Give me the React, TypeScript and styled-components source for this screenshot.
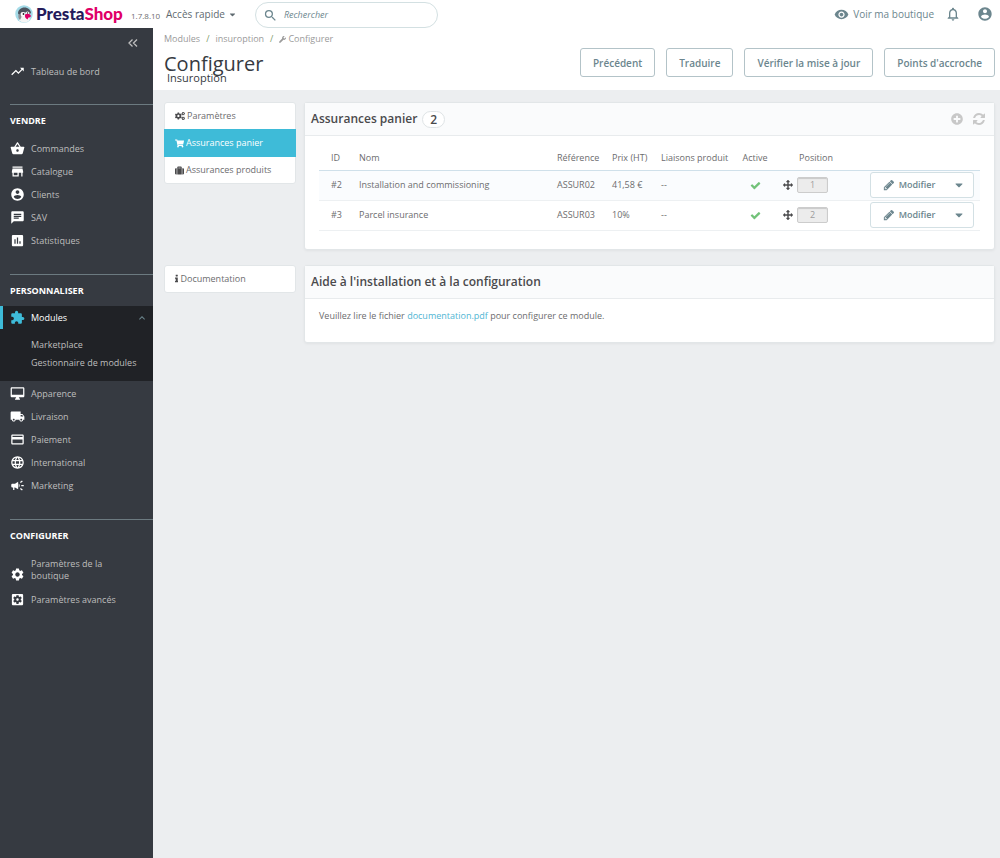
import React from "react";
import styled, { createGlobalStyle, css } from "styled-components";
import {
  MdTrendingUp, MdChat, MdAssessment, MdExtension, MdLocalShipping, MdPayment, MdLanguage,
  MdSettings, MdVisibility, MdNotificationsNone, MdSearch, MdKeyboardArrowUp,
} from "react-icons/md";
import { FaWrench, FaCogs, FaShoppingCart, FaSuitcase, FaCaretDown, FaPlusCircle } from "react-icons/fa";

const GlobalStyle = createGlobalStyle`
  *, *::before, *::after { box-sizing: border-box; }
  body {
    margin: 0;
    background: #eceef0;
    color: #6c6c6e;
    font-family: "Open Sans", "Liberation Sans", sans-serif;
    font-size: 9px;
    line-height: 12px;
  }
  button, input { font-family: inherit; }
  a { text-decoration: none; color: inherit; }
  ul { list-style: none; margin: 0; padding: 0; }
  h1, h2, h3, p { margin: 0; }
  svg { flex: none; display: block; }
`;

const Page = styled.div`
  min-height: 100vh;
  display: flex;
  flex-direction: column;
`;

const TopBar = styled.header`
  height: 28px;
  flex: none;
  display: flex;
  align-items: center;
  background: #fff;
  padding: 0 7px 0 15px;
`;

const Logo = styled.a`
  display: flex;
  align-items: center;
  gap: 3px;
  width: 109px;
  font-family: Lato, "Open Sans", sans-serif;
  font-size: 17px;
  font-weight: 900;
  line-height: 24px;
  color: #251b5b;
`;

const LogoAccent = styled.span`
  color: #df0067;
`;

const Version = styled.span`
  width: 35px;
  margin-left: 7px;
  padding-top: 3px;
  font-size: 8px;
  white-space: nowrap;
`;

const QuickAccess = styled.button`
  display: flex;
  align-items: center;
  gap: 3px;
  padding: 0;
  border: 0;
  background: none;
  color: #5f6a70;
  font-size: 10px;
  line-height: 14px;
`;

const SearchBox = styled.label`
  display: flex;
  align-items: center;
  gap: 6px;
  width: 183px;
  height: 26px;
  margin: 2px 0 0 18px;
  padding: 0 7px;
  border: 1px solid #d3e0e2;
  border-radius: 13px;
  color: #6c868e;
`;

const SearchInput = styled.input`
  flex: 1;
  min-width: 0;
  padding: 0;
  border: 0;
  outline: 0;
  background: none;
  font-size: 9px;
  line-height: 14px;
  font-style: italic;
  &::placeholder { color: #6c868e; opacity: 1; }
`;

const TopActions = styled.div`
  display: flex;
  align-items: center;
  margin-left: auto;
  color: #6c868e;
`;

const ShopLink = styled.a`
  display: flex;
  align-items: center;
  gap: 4px;
  margin-right: 11px;
  font-size: 10px;
  line-height: 14px;
`;

const IconButton = styled.button<{ $muted?: boolean }>`
  display: flex;
  padding: 0;
  border: 0;
  background: none;
  color: ${(p) => (p.$muted ? "#c8c8c8" : "#6c868e")};
`;

const ActionGroup = styled.div<{ $gap: number }>`
  display: flex;
  align-items: center;
  gap: ${(p) => p.$gap}px;
`;

const Shell = styled.div`
  flex: 1;
  display: flex;
`;

const Sidebar = styled.nav`
  width: 153px;
  flex: none;
  background: #363a41;
  color: #bebebe;
`;

const CollapseRow = styled.div`
  display: flex;
  justify-content: flex-end;
  padding: 10px 15px 0 0;
  height: 32px;
`;

const CollapseButton = styled.button`
  display: flex;
  align-items: flex-start;
  padding: 0;
  border: 0;
  background: none;
  color: #bebebe;
`;

const Section = styled.section`
  padding-top: 21px;
`;

const Divider = styled.div`
  margin: 0 0 10px 10px;
  border-top: 1px solid #6c7a80;
`;

const SectionTitle = styled.h3`
  margin: 0 0 9px 10px;
  font-size: 9px;
  line-height: 12px;
  font-weight: 700;
  color: #fff;
`;

const Links = styled.ul`
  padding: 1px 0;
`;

const NavLink = styled.a<{ $active?: boolean; $tall?: boolean }>`
  display: flex;
  align-items: ${(p) => (p.$tall ? "flex-end" : "center")};
  gap: 6px;
  height: ${(p) => (p.$tall ? 36 : 23)}px;
  padding: 0 5px 0 10px;
  padding-bottom: ${(p) => (p.$tall ? 6 : 0)}px;
  color: #bebebe;
  > svg { color: #fff; }
  ${(p) =>
    p.$active &&
    css`
      padding-left: 7px;
      border-left: 3px solid #3ebbd8;
      background: #202226;
      color: #fff;
      > svg { color: #3ebbd8; }
      > svg:last-child { margin-left: auto; color: #6c868e; }
    `}
`;

const NavText = styled.span<{ $narrow?: boolean }>`
  max-width: ${(p) => (p.$narrow ? "80px" : "none")};
`;

const SubMenu = styled.ul`
  padding: 7px 0 9px 31px;
  background: #202226;
`;

const SubLink = styled.a`
  display: block;
  line-height: 18px;
  white-space: nowrap;
`;

const Main = styled.main`
  flex: 1;
  min-width: 0;
`;

const PageHead = styled.div`
  display: flex;
  align-items: flex-start;
  justify-content: space-between;
  height: 62px;
  padding: 5px 5px 0 11px;
  background: #fff;
`;

const Crumbs = styled.div`
  display: flex;
  gap: 6px;
  color: #9a9a9a;
  > a { display: flex; align-items: center; gap: 2px; }
`;

const Slash = styled.span`
  color: #7f9d6c;
`;

const Title = styled.h1`
  margin-top: 6px;
  font-size: 20px;
  line-height: 26px;
  font-weight: 400;
  color: #363a41;
`;

const SubTitle = styled.h2`
  margin: -6px 0 0 3px;
  font-size: 11px;
  line-height: 14px;
  font-weight: 400;
  color: #363a41;
`;

const HeadActions = styled.div`
  display: flex;
  gap: 11px;
  padding-top: 15px;
`;

const OutlineButton = styled.button`
  height: 29px;
  padding: 0 12px;
  border: 1px solid #b3c3c8;
  border-radius: 3px;
  background: #fff;
  color: #6c868e;
  font-size: 10px;
  line-height: 14px;
  font-weight: 600;
  white-space: nowrap;
`;

const Content = styled.div`
  display: grid;
  grid-template-columns: 132px minmax(0, 1fr);
  column-gap: 8px;
  row-gap: 15px;
  align-items: start;
  padding: 12px 5px 0 11px;
`;

const SideList = styled.ul`
  border: 1px solid #e2e6e8;
  border-radius: 3px;
  background: #fff;
`;

const SideLink = styled.a<{ $active?: boolean }>`
  display: flex;
  align-items: center;
  gap: 2px;
  height: 26px;
  padding: 0 10px;
  > svg { color: #4a4a4c; }
  ${(p) =>
    p.$active &&
    css`
      height: 28px;
      margin: 0 -1px;
      padding: 0 11px;
      background: #3ebbd8;
      color: #fff;
      > svg { color: #fff; }
    `}
`;

const Panel = styled.section`
  border: 1px solid #e2e6e8;
  border-radius: 3px;
  background: #fff;
  box-shadow: 0 1px 3px rgba(0, 0, 0, 0.05);
`;

const PanelHead = styled.div`
  display: flex;
  align-items: center;
  height: 33px;
  padding: 0 9px 0 6px;
  border-bottom: 1px solid #e8ebed;
  background: #fafbfc;
  > div { margin-left: auto; }
`;

const PanelTitle = styled.h2`
  font-size: 12px;
  line-height: 16px;
  font-weight: 600;
  color: #4a4a4c;
`;

const Count = styled.span`
  margin-left: 5px;
  padding: 0 7px;
  border: 1px solid #dfe4e6;
  border-radius: 9px;
  background: #fff;
  color: #4a4a4c;
  font-size: 12px;
  line-height: 15px;
  font-weight: 600;
`;

const PanelBody = styled.div<{ $kind: "table" | "text" }>`
  padding: ${(p) => (p.$kind === "table" ? "8px 14px 18px" : "11px 14px 20px")};
`;

const Table = styled.table`
  width: 100%;
  border-collapse: collapse;
  table-layout: fixed;
`;

const Th = styled.th<{ $w?: number; $center?: boolean; $indent?: number }>`
  width: ${(p) => (p.$w ? `${p.$w}px` : "auto")};
  height: 26px;
  padding: 2px 0 0 ${(p) => p.$indent || 0}px;
  border-bottom: 1px solid #cfe0ea;
  font-weight: 400;
  text-align: ${(p) => (p.$center ? "center" : "left")};
  white-space: nowrap;
`;

const Row = styled.tr`
  &:nth-child(odd) { background: #fafcfe; }
`;

const Td = styled.td<{ $center?: boolean; $indent?: number }>`
  height: 30px;
  padding: 0 0 0 ${(p) => p.$indent || 0}px;
  border-bottom: 1px solid #edf0f2;
  text-align: ${(p) => (p.$center ? "center" : "left")};
  white-space: nowrap;
  > svg { margin: 0 auto; color: #72c279; }
`;

const Position = styled.div`
  display: flex;
  align-items: center;
  justify-content: center;
  gap: 4px;
  color: #4a4a4c;
  padding-right: 21px;
`;

const PositionBadge = styled.span`
  width: 31px;
  border: 1px solid #ccc;
  border-radius: 2px;
  background: #ececec;
  box-shadow: inset 0 1px 1px rgba(0, 0, 0, 0.15);
  color: #9c9c9c;
  line-height: 14px;
`;

const Split = styled.div`
  display: flex;
  width: 104px;
  height: 26px;
  border: 1px solid #d3e0e4;
  border-radius: 3px;
  background: #fff;
`;

const SplitButton = styled.button<{ $caret?: boolean }>`
  display: flex;
  align-items: center;
  justify-content: center;
  gap: 4px;
  flex: ${(p) => (p.$caret ? "0 0 28px" : "1")};
  padding: ${(p) => (p.$caret ? "0" : "0 0 0 2px")};
  border: 0;
  background: none;
  color: #6c868e;
  font-size: 9px;
  line-height: 12px;
  font-weight: 600;
`;

const DocLink = styled.a`
  color: #4fb5d3;
`;

type GlyphProps = { size?: number | string };

const glyph = (viewBox: string, d: string) => ({ size = 15 }: GlyphProps) => (
  <svg height={size} viewBox={viewBox} fill="currentColor" aria-hidden="true">
    <path d={d} />
  </svg>
);

const Basket = glyph("0 0 24 24", "M17.210 9l-4.380-6.560c-.19-.28-.51-.42-.83-.42-.32 0-.64.14-.83.43L6.790 9H2c-.55 0-1 .45-1 1 0 .09.01.18.04.27l2.540 9.270c.23.84 1 1.460 1.920 1.460h13c.92 0 1.690-.62 1.930-1.460l2.540-9.270L23 10c0-.55-.45-1-1-1h-4.790zM9 9l3-4.400L15 9H9zm3 8c-1.100 0-2-.9-2-2s.9-2 2-2 2 .9 2 2-.9 2-2 2z");
const Store = glyph("0 0 24 24", "M20 4H4v2h16V4zm1 10v-2l-1-5H4l-1 5v2h1v6h10v-6h4v6h2v-6h1zm-9 4H6v-4h6v4z");
const Account = glyph("0 0 24 24", "M12 2C6.480 2 2 6.480 2 12s4.480 10 10 10 10-4.480 10-10S17.520 2 12 2zm0 3c1.660 0 3 1.340 3 3s-1.340 3-3 3-3-1.340-3-3 1.340-3 3-3zm0 14.200c-2.500 0-4.710-1.280-6-3.220.03-1.990 4-3.080 6-3.080 1.990 0 5.970 1.090 6 3.080-1.290 1.940-3.500 3.220-6 3.220z");
const Desktop = glyph("0 0 24 24", "M21 2H3c-1.100 0-2 .9-2 2v12c0 1.100.9 2 2 2h7l-2 3v1h8v-1l-2-3h7c1.100 0 2-.9 2-2V4c0-1.100-.9-2-2-2zm0 12H3V4h18v10z");
const Campaign = glyph("0 0 24 24", "M18 11v2h4v-2h-4zm-2 6.610c.96.71 2.210 1.650 3.200 2.390.4-.53.8-1.070 1.200-1.600-.99-.74-2.240-1.680-3.200-2.400-.4.54-.8 1.080-1.200 1.610zM20.400 5.600c-.4-.53-.8-1.070-1.200-1.600-.99.74-2.240 1.680-3.200 2.400.4.53.8 1.070 1.200 1.600.96-.72 2.210-1.650 3.200-2.400zM4 9c-1.100 0-2 .9-2 2v2c0 1.100.9 2 2 2h1v4h2v-4h1l5 3V6L8 9H4zm11.500 3c0-1.330-.58-2.530-1.500-3.350v6.690c.92-.81 1.500-2.010 1.500-3.340z");
const AdvancedSettings = glyph("0 0 24 24", "M12 10c-1.100 0-2 .9-2 2s.9 2 2 2 2-.9 2-2-.9-2-2-2zm7-7H5c-1.110 0-2 .9-2 2v14c0 1.100.89 2 2 2h14c1.110 0 2-.9 2-2V5c0-1.100-.89-2-2-2zm-1.750 9c0 .23-.02.46-.05.68l1.480 1.160c.13.11.17.3.08.45l-1.400 2.420c-.09.15-.27.21-.43.15l-1.740-.7c-.36.28-.76.51-1.180.69l-.26 1.850c-.03.17-.18.3-.35.3h-2.800c-.17 0-.32-.13-.35-.29l-.26-1.850c-.43-.18-.82-.41-1.180-.69l-1.740.7c-.16.06-.34 0-.43-.15l-1.400-2.420c-.09-.15-.05-.34.08-.45l1.480-1.160c-.03-.23-.05-.46-.05-.69 0-.23.02-.46.05-.68l-1.480-1.160c-.13-.11-.17-.3-.08-.45l1.400-2.420c.09-.15.27-.21.43-.15l1.740.7c.36-.28.76-.51 1.180-.69l.26-1.850c.03-.17.18-.3.35-.3h2.800c.17 0 .32.13.35.29l.26 1.850c.43.18.82.41 1.180.69l1.740-.7c.16-.06.34 0 .43.15l1.400 2.420c.09.15.05.34-.08.45l-1.480 1.160c.03.23.05.46.05.69z");
const Pencil = glyph("0 0 1792 1792", "M491 1536l91-91-235-235-91 91v107h128v128h107zm523-928q0-22-22-22-10 0-17 7l-542 542q-7 7-7 17 0 22 22 22 10 0 17-7l542-542q7-7 7-17zm-54-192l416 416-832 832h-416v-416zm683 96q0 53-37 90l-166 166-416-416 166-165q36-38 90-38 53 0 91 38l235 234q37 39 37 91z");
const Check = glyph("0 0 1792 1792", "M1671 566q0 40-28 68l-724 724-136 136q-28 28-68 28t-68-28l-136-136-362-362q-28-28-28-68t28-68l136-136q28-28 68-28t68 28l294 295 656-657q28-28 68-28t68 28l136 136q28 28 28 68z");
const Arrows = glyph("0 0 1792 1792", "M1792 896q0 26-19 45l-256 256q-19 19-45 19t-45-19-19-45v-128h-384v384h128q26 0 45 19t19 45-19 45l-256 256q-19 19-45 19t-45-19l-256-256q-19-19-19-45t19-45 45-19h128v-384h-384v128q0 26-19 45t-45 19-45-19l-256-256q-19-19-19-45t19-45l256-256q19-19 45-19t45 19 19 45v128h384v-384h-128q-26 0-45-19t-19-45 19-45l256-256q19-19 45-19t45 19l256 256q19 19 19 45t-19 45-45 19h-128v384h384v-128q0-26 19-45t45-19 45 19l256 256q19 19 19 45z");
const Refresh = glyph("128 128 1536 1536", "M1639 1056q0 5-1 7-64 268-268 434.500t-478 166.500q-146 0-282.500-55t-243.500-157l-129 129q-19 19-45 19t-45-19-19-45v-448q0-26 19-45t45-19h448q26 0 45 19t19 45-19 45l-137 137q71 66 161 102t187 36q134 0 250-65t186-179q11-17 53-117 8-23 30-23h192q13 0 22.500 9.500t9.500 22.500zm25-800v448q0 26-19 45t-45 19h-448q-26 0-45-19t-19-45 19-45l138-138q-148-137-349-137-134 0-250 65t-186 179q-11 17-53 117-8 23-30 23h-199q-13 0-22.500-9.500t-9.500-22.500v-7q65-268 270-434.500t480-166.500q146 0 284 55.500t245 156.500l130-129q19-19 45-19t45 19 19 45z");
const Info = glyph("0 0 640 1664", "M640 1344v128q0 26-19 45t-45 19h-512q-26 0-45-19t-19-45v-128q0-26 19-45t45-19h64v-384h-64q-26 0-45-19t-19-45v-128q0-26 19-45t45-19h384q26 0 45 19t19 45v576h64q26 0 45 19t19 45zm-128-1152v192q0 26-19 45t-45 19h-256q-26 0-45-19t-19-45v-192q0-26 19-45t45-19h256q26 0 45 19t19 45z");

type NavItem = { icon: React.ComponentType<GlyphProps>; label: string; tall?: boolean };

const sell: NavItem[] = [
  { icon: Basket, label: "Commandes" },
  { icon: Store, label: "Catalogue" },
  { icon: Account, label: "Clients" },
  { icon: MdChat, label: "SAV" },
  { icon: MdAssessment, label: "Statistiques" },
];

const improve: NavItem[] = [
  { icon: Desktop, label: "Apparence" },
  { icon: MdLocalShipping, label: "Livraison" },
  { icon: MdPayment, label: "Paiement" },
  { icon: MdLanguage, label: "International" },
  { icon: Campaign, label: "Marketing" },
];

const configure: NavItem[] = [
  { icon: MdSettings, label: "Paramètres de la boutique", tall: true },
  { icon: AdvancedSettings, label: "Paramètres avancés" },
];

const insurances = [
  { id: "#2", name: "Installation and commissioning", ref: "ASSUR02", price: "41,58 €", position: 1 },
  { id: "#3", name: "Parcel insurance", ref: "ASSUR03", price: "10%", position: 2 },
];

const NavList = ({ items }: { items: NavItem[] }) => (
  <Links>
    {items.map(({ icon: Icon, label, tall }) => (
      <li key={label}>
        <NavLink href="#" $tall={tall}>
          <Icon size={15} />
          <NavText $narrow={tall}>{label}</NavText>
        </NavLink>
      </li>
    ))}
  </Links>
);

const Mascot = () => (
  <svg width="18" height="18" viewBox="0 0 36 36" aria-hidden="true">
    <circle cx="18" cy="18" r="17.500" fill="#a4dbe8" />
    <path d="M8 31c0-6 1-10 5-12l13 1c3 3 4 7 3 11a17.500 17.500 0 0 1-21 0z" fill="#f4f4f4" />
    <path d="M6 17C6 10 12 5 19 5s13 5 13 11l-3 2-6-3-7 1-6 6z" fill="#4d5560" />
    <path d="M7 19l4-1 2 6-3 6c-3-2-4-7-3-11z" fill="#8d8f95" />
    <ellipse cx="16" cy="18" rx="5" ry="4" fill="#fff" />
    <ellipse cx="25" cy="16" rx="4" ry="3" fill="#fff" />
    <circle cx="17" cy="18" r="1.800" fill="#22242a" />
    <circle cx="25" cy="16" r="1.500" fill="#22242a" />
    <path d="M20 19c5-3 10-2 12 3-1 3-3 3-5 3l-2 4c-4-2-6-6-5-10z" fill="#df0067" />
  </svg>
);

export default function App() {
  return (
    <Page>
      <GlobalStyle />
      <TopBar>
        <Logo href="#">
          <Mascot />
          <span>Presta<LogoAccent>Shop</LogoAccent></span>
        </Logo>
        <Version>1.7.8.10</Version>
        <QuickAccess>
          Accès rapide <FaCaretDown size={9} />
        </QuickAccess>
        <SearchBox>
          <MdSearch size={15} />
          <SearchInput type="text" placeholder="Rechercher" aria-label="Rechercher" />
        </SearchBox>
        <TopActions>
          <ShopLink href="#">
            <MdVisibility size={15} /> Voir ma boutique
          </ShopLink>
          <ActionGroup $gap={16}>
            <IconButton aria-label="Notifications"><MdNotificationsNone size={16} /></IconButton>
            <IconButton aria-label="Compte"><Account size={16} /></IconButton>
          </ActionGroup>
        </TopActions>
      </TopBar>

      <Shell>
        <Sidebar>
          <CollapseRow>
            <CollapseButton aria-label="Réduire le menu">
              <svg width="10" height="10" viewBox="0 0 10 10" fill="none" stroke="currentColor" strokeWidth="1.300">
                <path d="M4.500 1.500L1 5l3.500 3.500M9 1.500L5.500 5 9 8.500" />
              </svg>
            </CollapseButton>
          </CollapseRow>
          <NavLink href="#">
            <MdTrendingUp size={15} />
            <NavText>Tableau de bord</NavText>
          </NavLink>

          <Section>
            <Divider />
            <SectionTitle>VENDRE</SectionTitle>
            <NavList items={sell} />
          </Section>

          <Section>
            <Divider />
            <SectionTitle>PERSONNALISER</SectionTitle>
            <NavLink href="#" $active>
              <MdExtension size={15} />
              <NavText>Modules</NavText>
              <MdKeyboardArrowUp size={12} />
            </NavLink>
            <SubMenu>
              <li><SubLink href="#">Marketplace</SubLink></li>
              <li><SubLink href="#">Gestionnaire de modules</SubLink></li>
            </SubMenu>
            <NavList items={improve} />
          </Section>

          <Section>
            <Divider />
            <SectionTitle>CONFIGURER</SectionTitle>
            <NavList items={configure} />
          </Section>
        </Sidebar>

        <Main>
          <PageHead>
            <div>
              <Crumbs>
                <a href="#">Modules</a>
                <Slash>/</Slash>
                <a href="#">insuroption</a>
                <Slash>/</Slash>
                <a href="#"><FaWrench size={7} /> Configurer</a>
              </Crumbs>
              <Title>Configurer</Title>
              <SubTitle>Insuroption</SubTitle>
            </div>
            <HeadActions>
              <OutlineButton>Précédent</OutlineButton>
              <OutlineButton>Traduire</OutlineButton>
              <OutlineButton>Vérifier la mise à jour</OutlineButton>
              <OutlineButton>Points d'accroche</OutlineButton>
            </HeadActions>
          </PageHead>

          <Content>
            <SideList>
              <li><SideLink href="#"><FaCogs size={10} /> Paramètres</SideLink></li>
              <li><SideLink href="#" $active><FaShoppingCart size={9} /> Assurances panier</SideLink></li>
              <li><SideLink href="#"><FaSuitcase size={9} /> Assurances produits</SideLink></li>
            </SideList>
            <Panel>
              <PanelHead>
                <PanelTitle>Assurances panier</PanelTitle>
                <Count>2</Count>
                <ActionGroup $gap={10}>
                  <IconButton $muted aria-label="Ajouter"><FaPlusCircle size={12} /></IconButton>
                  <IconButton $muted aria-label="Rafraîchir"><Refresh size={12} /></IconButton>
                </ActionGroup>
              </PanelHead>
              <PanelBody $kind="table">
                <Table>
                  <thead>
                    <tr>
                      <Th $w={40} $indent={12}>ID</Th>
                      <Th>Nom</Th>
                      <Th $w={55}>Référence</Th>
                      <Th $w={49}>Prix (HT)</Th>
                      <Th $w={74}>Liaisons produit</Th>
                      <Th $w={40} $center>Active</Th>
                      <Th $w={82} $center>Position</Th>
                      <Th $w={123} aria-label="Actions" />
                    </tr>
                  </thead>
                  <tbody>
                    {insurances.map((item) => (
                      <Row key={item.id}>
                        <Td $indent={12}>{item.id}</Td>
                        <Td>{item.name}</Td>
                        <Td>{item.ref}</Td>
                        <Td>{item.price}</Td>
                        <Td>--</Td>
                        <Td $center><Check size={11} /></Td>
                        <Td $center>
                          <Position>
                            <Arrows size={10} />
                            <PositionBadge>{item.position}</PositionBadge>
                          </Position>
                        </Td>
                        <Td $indent={13}>
                          <Split>
                            <SplitButton><Pencil size={12} /> Modifier</SplitButton>
                            <SplitButton $caret aria-label="Plus d'actions"><FaCaretDown size={12} /></SplitButton>
                          </Split>
                        </Td>
                      </Row>
                    ))}
                  </tbody>
                </Table>
              </PanelBody>
            </Panel>

            <SideList>
              <li><SideLink href="#"><Info size={9} /> Documentation</SideLink></li>
            </SideList>
            <Panel>
              <PanelHead>
                <PanelTitle>Aide à l'installation et à la configuration</PanelTitle>
              </PanelHead>
              <PanelBody $kind="text">
                <p>
                  Veuillez lire le fichier <DocLink href="#">documentation.pdf</DocLink> pour configurer ce module.
                </p>
              </PanelBody>
            </Panel>
          </Content>
        </Main>
      </Shell>
    </Page>
  );
}
